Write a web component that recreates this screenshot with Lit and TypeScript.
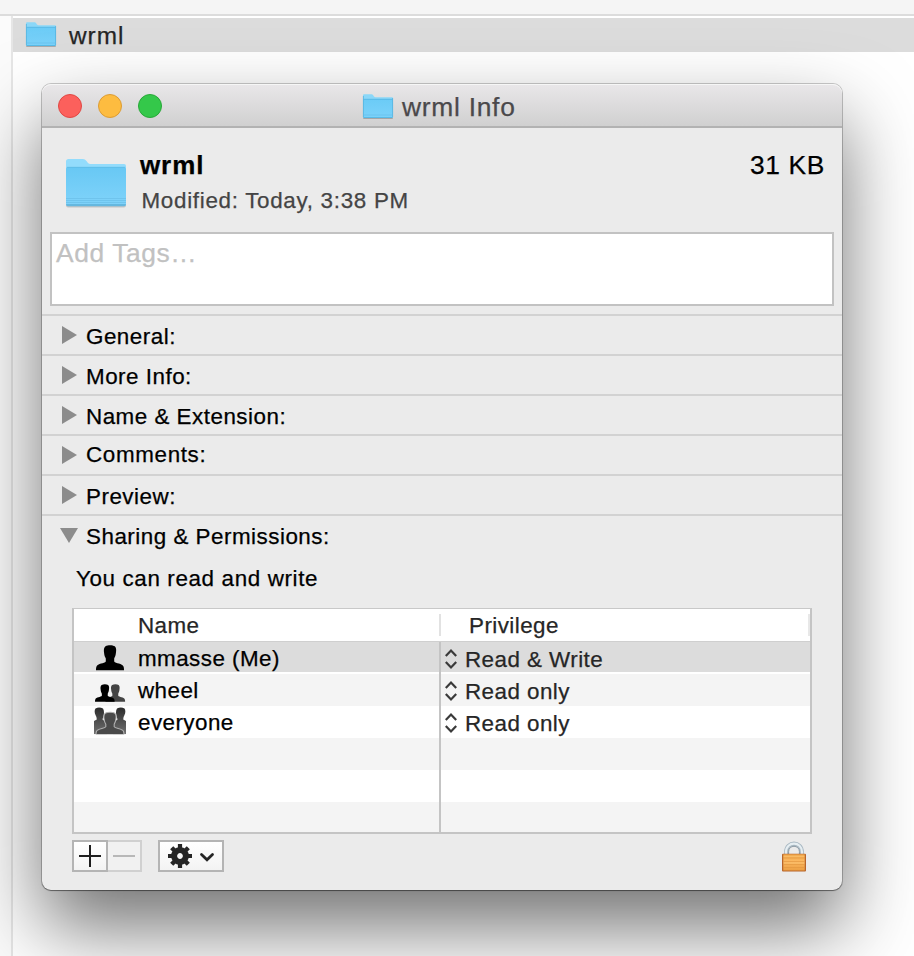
import { LitElement, html, css, svg, nothing } from "lit";
import { customElement, property } from "lit/decorators.js";

@customElement("folder-icon")
class FolderIcon extends LitElement {
  @property({ type: Boolean }) large = false;
  static styles = css`
    :host { display: block; line-height: 0; }
    svg { display: block; overflow: visible; }
  `;
  render() {
    return this.large
      ? html`<svg width="62" height="52" viewBox="0 0 62 52">
          <defs>
            <linearGradient id="g" x1="0" y1="0" x2="0" y2="1">
              <stop offset="0" stop-color="#68c8f4" /><stop offset="1" stop-color="#80d3fa" />
            </linearGradient>
          </defs>
          <rect x="1" y="44" width="60" height="5.500" rx="2" fill="#000" opacity=".16" />
          <path d="M1 3.500Q1 1 3.500 1H18Q20 1 21.500 3L23 5Q24 6 25.500 6H59Q61 6 61 8V20H1Z" fill="#93dcfc" />
          <path d="M1 11Q1 9 3 9H59Q61 9 61 11V46Q61 48 59 48H3Q1 48 1 46Z" fill="url(#g)" />
          <path d="M2 9.300H60" stroke="#5bb8e2" stroke-width=".7" />
          <path d="M1 40.500H61M1 42.500H61M1 44.500H61" stroke="#6cc0ea" stroke-width=".8" />
          <path d="M1 46H61Q61 48.200 59 48.200H3Q1 48.200 1 46Z" fill="#66b8df" />
        </svg>`
      : html`<svg width="32" height="26" viewBox="0 0 32 26">
          <defs>
            <linearGradient id="g" x1="0" y1="0" x2="0" y2="1">
              <stop offset="0" stop-color="#6bcbf6" /><stop offset="1" stop-color="#7bd2fa" />
            </linearGradient>
          </defs>
          <rect x="1" y="21" width="30" height="4" rx="1" fill="#000" opacity=".22" />
          <path d="M1 1.500Q1 .3 2 .3H9.500Q10.500 .3 11.200 1.300L12 2.500Q12.500 3.300 13.500 3.300H30Q31 3.300 31 4.300V12H1Z" fill="#8bd7f8" />
          <path d="M1 5.200H31V23Q31 24 30 24H2Q1 24 1 23Z" fill="url(#g)" />
          <path d="M1.500 5.300H30.500M1.500 23.500H30.500" stroke="#51b4e1" stroke-width=".8" />
          <path d="M1.400 2V23M30.600 4V23" stroke="#55b2dd" stroke-width=".8" />
          <path d="M2 21H30" stroke="#62bce8" stroke-width=".6" />
        </svg>`;
  }
}

const bust =
  "M9.500 1.200C12 -.2 16.500 -.2 18.800 1.300C20.300 2.800 20.400 5 19.900 8C19.700 10.500 18.900 12 18.200 13.500V16.500C19.500 18.600 26.500 18.300 27.500 21.500C28 23 28 24 28 25.200H0C0 24 0 23 .5 21.500C1.500 18.300 8.500 18.600 9.800 16.500V13.500C9 12 8.300 10.500 8.100 8C7.600 5 7.800 2.500 9.500 1.200Z";

const icons: Record<string, unknown> = {
  one: svg`<path d=${bust} transform="translate(4 3)" />`,
  two: svg`<path d=${bust} transform="translate(13.500 10.200) scale(.7)" fill="#444" />
    <path d=${bust} transform="translate(3 10.200) scale(.7)" />`,
  many: svg`<defs><linearGradient id="m" x1="0" y1="0" x2="0" y2="1">
      <stop offset="0" stop-color="#2c2c2c" /><stop offset="1" stop-color="#707070" /></linearGradient>
      <clipPath id="c"><rect x="2" y="0" width="32" height="28.200" /></clipPath></defs>
    <g clip-path="url(#c)">
    <path d="M3.500 2.500Q7 .3 11 2.500Q12.700 5 11.500 10Q10.800 12 10.500 13.500L15 17V28.200H2V15L4.800 13.500Q4.800 11 3.500 9Q1.800 5 3.500 2.500Z" fill="url(#m)" />
    <path d="M25 2.500Q29 .3 32.500 2.500Q34.200 5 32.500 9Q31.200 11 31.200 13.500L34 15V28.200H21V17L25.500 13.500Q25.200 12 24.500 10Q23.300 5 25 2.500Z" fill="url(#m)" />
    <path d=${bust} transform="translate(4 6) scale(1 .9)" fill="#4a4a4a" stroke="#b0b0b0" stroke-width="1.100" />
    </g>`,
};

@customElement("app-root")
class AppRoot extends LitElement {
  static styles = css`
    :host {
      display: block; position: relative; width: 914px; height: 956px; overflow: hidden;
      background: #fff; font-family: "Liberation Sans", Arial, sans-serif; color: #000;
      -webkit-text-stroke: .25px;
    }
    * { box-sizing: border-box; }
    svg { display: block; }
    .toolbar { height: 16px; background: #f5f5f5; border-bottom: 2px solid #dcdcdc; }
    .browser { display: flex; height: 940px; }
    .gutter { width: 13px; background: #fbfbfb; border-right: 2px solid #e6e6e6; }
    .list { flex: 1; padding-top: 2px; }
    .file {
      display: flex; height: 34px; background: #dcdcdc; padding-left: 12px; color: #262626;
      font-size: 24.400px; line-height: 35px; letter-spacing: .95px;
    }
    .file folder-icon { margin: 4px 12px 0 0; }
    .window {
      position: absolute; left: 42px; top: 84px; width: 800px; height: 806px;
      border-radius: 9px; background: #ebebeb;
      box-shadow: 0 0 0 1px rgba(0, 0, 0, .2), 0 1px 1px rgba(0, 0, 0, .35), 0 37px 78px rgba(0, 0, 0, .56);
    }
    .titlebar {
      display: flex; height: 44px; border-radius: 9px 9px 0 0; border-bottom: 2px solid #b2b2b2;
      background: linear-gradient(#e9e7e9, #d0d0d0); box-shadow: inset 0 1px #f6f6f6;
    }
    .lights { display: flex; gap: 16px; padding: 10px 0 0 16px; width: 320px; }
    .light { width: 24px; height: 24px; border-radius: 50%; border: 1px solid; }
    .red { background: #fc605c; border-color: #e04844; }
    .amber { background: #fdbc40; border-color: #dc9c34; }
    .green { background: #34c84a; border-color: #28a838; }
    .titlebar folder-icon { margin: 10px 8px 0 0; }
    .title { font-size: 26.400px; line-height: 46px; letter-spacing: .72px; color: #4b494b; }
    .summary { display: flex; height: 104px; padding: 30px 17px 0 23px; }
    .names { flex: 1; padding-left: 13px; }
    .name { font-weight: 700; font-size: 26px; line-height: 30px; margin-top: -8px; letter-spacing: .9px; height: 30px; }
    .modified { font-size: 22.400px; line-height: 25px; margin: 8px 0 0 1.500px; letter-spacing: .7px; color: #444; }
    .size { font-size: 26.400px; line-height: 30px; margin-top: -8px; letter-spacing: .6px; }
    .tags {
      height: 74px; margin: 0 8px; border: 2px solid #c2c2c2; background: #fff;
      font-size: 26.400px; line-height: 38px; padding-left: 4px; letter-spacing: .6px; color: #c1c1c1;
    }
    .sections { margin-top: 8px; }
    .section {
      display: flex; height: 40px; border-top: 2px solid #d2d2d2; padding-left: 18px;
      font-size: 22.400px; letter-spacing: .5px;
    }
    .section svg { width: 18px; height: 18px; margin: 10px 8px 0 0; fill: #8c8c8c; }
    .label { line-height: 37px; padding-top: 2px; }
    .label.raised { padding-top: 0; letter-spacing: .65px; }
    .access { margin-top: 12px; padding-left: 34px; font-size: 22.400px; line-height: 25px; letter-spacing: .63px; }
    .table {
      margin: 17px 30px 0; height: 226px; background: #fff; border: 2px solid #c4c4c4;
      border-top: 1px solid #c8c8c8; font-size: 22.400px; letter-spacing: .45px;
    }
    .row { display: grid; grid-template-columns: 367px 1fr; height: 32px; line-height: 33px; }
    .head { height: 33px; border-bottom: 1px solid #cfcfcf; color: #262626; }
    .head .who { padding-left: 64px; background: linear-gradient(#e2e2e2, #e2e2e2) right 5px / 2px 22px no-repeat; }
    .head .what { padding-left: 28px; background: linear-gradient(#e8e8e8, #e8e8e8) right 5px / 2px 22px no-repeat; }
    .row.head .what { padding-top: 0; }
    .who { display: flex; }
    .row:not(.head) .who { border-right: 2px solid #c4c4c4; padding-left: 18px; }
    .who svg { width: 34px; height: 32px; margin-right: 12px; }
    .what { display: flex; padding: 1px 0 0 4px; color: #262626; }
    .what svg { margin: 5px 8px 0 0; }
    .grey { background: #f4f4f4; }
    .selected { background: linear-gradient(#dcdcdc, #dcdcdc) 0 0 / 100% 30px no-repeat; }
    .last { height: 30px; }
    .actions { display: flex; margin: 6px 30px 0; height: 32px; }
    .btn { height: 32px; border: 2px solid #b4b4b4; background: linear-gradient(#fff, #f3f3f3); }
    .add { width: 36px; }
    .remove { width: 34px; border-color: #d0d0d0; border-left: 0; background: #f1f1f1; }
    .gear { width: 66px; margin-left: 16px; }
    .lock { margin: 0 4px 0 auto; }
  `;

  private row(icon?: string, who?: string, what?: string, cls = "") {
    return html`<div class="row ${cls}">
      <div class="who">${icon ? html`<svg viewBox="0 0 34 32">${icons[icon]}</svg><span>${who}</span>` : nothing}</div>
      <div class="what">${what
        ? html`<svg width="12" height="22" viewBox="0 0 12 22" fill="none" stroke="#3a3a3a" stroke-width="2.200">
              <path d="M.8 8 6 2.500 11.200 8M.8 14 6 19.500 11.200 14" /></svg><span>${what}</span>`
        : nothing}</div>
    </div>`;
  }

  render() {
    const closed = ["General:", "More Info:", "Name & Extension:", "Comments:", "Preview:"];
    return html`
      <div class="toolbar"></div>
      <div class="browser">
        <div class="gutter"></div>
        <div class="list"><div class="file"><folder-icon></folder-icon><span>wrml</span></div></div>
      </div>
      <div class="window">
        <div class="titlebar">
          <div class="lights">
            <div class="light red"></div><div class="light amber"></div><div class="light green"></div>
          </div>
          <folder-icon></folder-icon>
          <div class="title">wrml Info</div>
        </div>
        <div class="summary">
          <folder-icon large></folder-icon>
          <div class="names">
            <div class="name">wrml</div>
            <div class="modified">Modified: Today, 3:38 PM</div>
          </div>
          <div class="size">31 KB</div>
        </div>
        <div class="tags">Add Tags…</div>
        <div class="sections">
          ${closed.map((t) => html`<div class="section">
            <svg viewBox="0 0 18 18"><path d="M2 0 17 9 2 18Z" /></svg>
            <div class="label ${t === "Comments:" ? "raised" : ""}">${t}</div>
          </div>`)}
          <div class="section">
            <svg viewBox="0 0 18 18"><path d="M0 2H18L9 17Z" /></svg>
            <div class="label">Sharing &amp; Permissions:</div>
          </div>
        </div>
        <div class="access">You can read and write</div>
        <div class="table">
          <div class="row head"><div class="who">Name</div><div class="what">Privilege</div></div>
          ${this.row("one", "mmasse (Me)", "Read & Write", "selected")}
          ${this.row("two", "wheel", "Read only", "grey")}
          ${this.row("many", "everyone", "Read only")}
          ${this.row(undefined, undefined, undefined, "grey")}
          ${this.row()}
          ${this.row(undefined, undefined, undefined, "grey last")}
        </div>
        <div class="actions">
          <div class="btn add">
            <svg width="32" height="28"><path d="M5 14H27M16 3V25" stroke="#1e1e1e" stroke-width="2" /></svg>
          </div>
          <div class="btn remove">
            <svg width="32" height="28"><path d="M5 14H27" stroke="#b8b8b8" stroke-width="2" /></svg>
          </div>
          <div class="btn gear">
            <svg width="62" height="28" viewBox="0 0 62 28">
              <g transform="translate(20 14)" stroke="#262626" fill="none">
                <circle r="5.900" stroke-width="6" />
                <path d="M0-7V-12M0 7V12M7 0H12M-7 0H-12" stroke-width="4.200" />
                <path d="M5 5 8.300 8.300M-5 5-8.300 8.300M5-5 8.300-8.300M-5-5-8.300-8.300" stroke-width="4.400" />
              </g>
              <path d="M41.500 12.500 47 17.800 52.500 12.500" fill="none" stroke="#262626" stroke-width="2.800" stroke-linecap="round" />
            </svg>
          </div>
          <svg class="lock" width="28" height="34" viewBox="0 0 28 34">
            <defs>
              <linearGradient id="b" x1="0" y1="0" x2="0" y2="1">
                <stop offset="0" stop-color="#f0a64a" /><stop offset=".4" stop-color="#fbb860" /><stop offset="1" stop-color="#eca044" />
              </linearGradient>
            </defs>
            <path d="M6.300 16V12C6.300 1 21.700 1 21.700 12V16" fill="none" stroke="#a9b8c2" stroke-width="4.400" />
            <path d="M6 16V12C6 .8 22 .8 22 12V16" fill="none" stroke="#e6eef2" stroke-width="2.200" />
            <path d="M8.600 15V11.500C8.600 4.600 19.400 4.600 19.400 11.500V15" fill="none" stroke="#84949f" stroke-width=".9" />
            <rect x="2" y="13.800" width="24" height="17.600" rx="1" fill="#b7652a" />
            <rect x="3.300" y="14.300" width="21.400" height="16.200" fill="url(#b)" />
            <path d="M3.500 18H24.500M3.500 21.500H24.500M3.500 24.500H24.500M3.500 27.500H24.500" stroke="#e0963e" stroke-width=".6" />
            <path d="M3.500 16.300H24.500M3.500 23H24.500" stroke="#ffd084" stroke-width=".5" />
          </svg>
        </div>
      </div>
    `;
  }
}
